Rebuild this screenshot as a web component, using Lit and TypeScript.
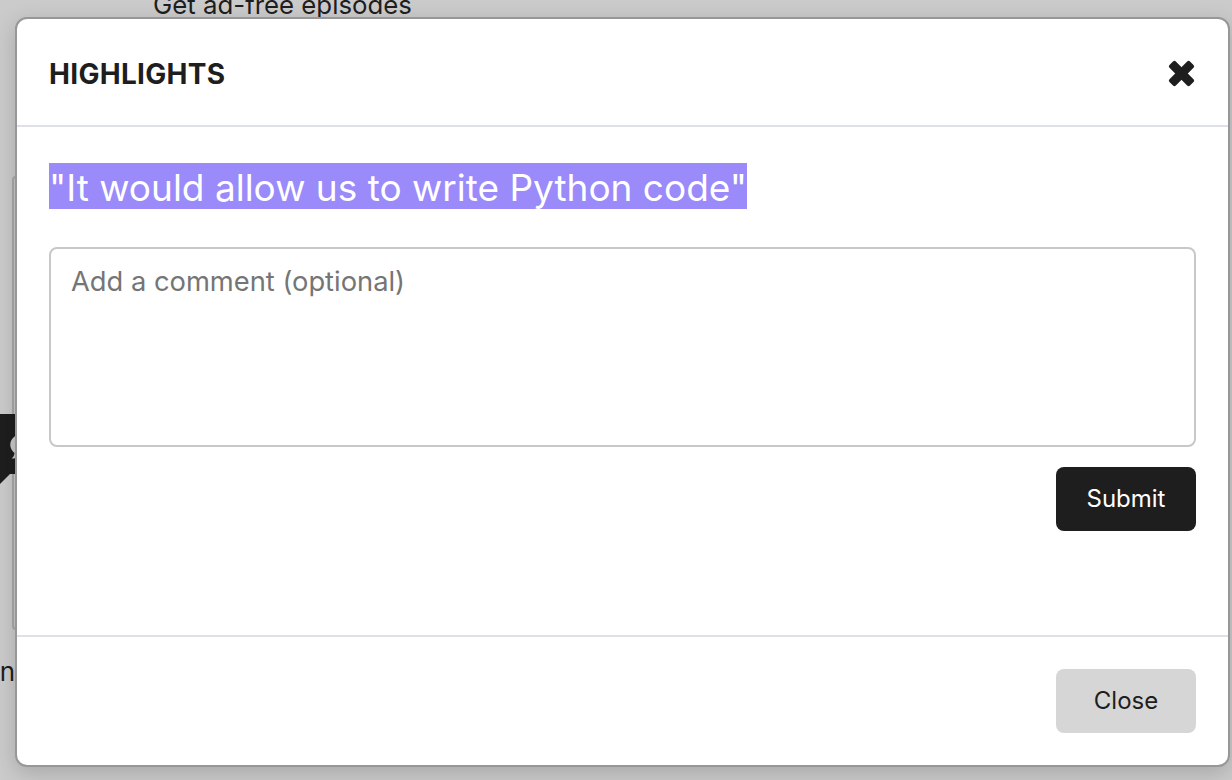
import { LitElement, html, css } from "lit";
import { customElement } from "lit/decorators.js";

@customElement("app-root")
export class AppRoot extends LitElement {
  static styles = css`
    :host {
      display: block;
      width: 1232px;
      height: 780px;
      overflow: hidden;
      position: relative;
      background: #cbcbcb;
      font-family: Inter, "Liberation Sans", sans-serif;
      color: #1e1e1e;
    }
    .page {
      height: 780px;
      display: flex;
      flex-direction: column;
      overflow: hidden;
    }
    .promo {
      margin: -9px 0 0 153px;
      font-size: 25.8px;
      line-height: 28px;
      height: 28px;
      flex: none;
      white-space: nowrap;
    }
    .card {
      margin: 157px 0 0 12px;
      width: 120px;
      height: 454px;
      flex: none;
      box-sizing: border-box;
      border: 2px solid #a9a9a9;
      border-radius: 4px;
    }
    .tag {
      position: absolute;
      left: 0;
      top: 414px;
      width: 40px;
      height: 60px;
      background: #1e1e1e;
    }
    .tag-tail {
      position: absolute;
      left: 0;
      top: 474px;
      width: 0;
      height: 0;
      border-top: 10px solid #1e1e1e;
      border-right: 10px solid transparent;
    }
    .bubble {
      position: absolute;
      left: 9px;
      top: 17px;
      width: 30px;
      height: 30px;
      display: block;
    }
    .cut {
      margin: 27px 0 0 -37px;
      font-size: 26px;
      line-height: 30px;
      white-space: nowrap;
    }
    .modal {
      position: absolute;
      left: 15px;
      top: 17px;
      width: 1215px;
      height: 750px;
      box-sizing: border-box;
      display: flex;
      flex-direction: column;
      background: #fff;
      border: 2px solid #979797;
      border-radius: 12px;
      box-shadow: 0 6px 22px rgba(0, 0, 0, 0.18);
    }
    .head {
      flex: none;
      height: 108px;
      box-sizing: border-box;
      border-bottom: 2px solid #dee2e6;
      display: flex;
      align-items: center;
      justify-content: space-between;
      padding: 0 33px 0 32px;
    }
    .title {
      font-size: 28px;
      font-weight: 700;
      letter-spacing: 0.3px;
      margin: 4px 0 0;
      color: #1e1e1e;
    }
    .x {
      width: 27px;
      height: 27px;
      display: block;
      margin-top: 2px;
    }
    .body {
      flex: 1;
      padding: 36px 32px 0;
      display: flex;
      flex-direction: column;
      align-items: stretch;
    }
    .quote {
      align-self: flex-start;
      background: #9a8afa;
      color: #fff;
      font-size: 37px;
      line-height: 42px;
      padding-top: 4px;
      white-space: nowrap;
    }
    .comment {
      margin-top: 38px;
      height: 200px;
      box-sizing: border-box;
      border: 2px solid #c8c8c8;
      border-radius: 8px;
      padding: 15px 20px;
      font-size: 27.3px;
      line-height: 36px;
      color: #757575;
    }
    .actions {
      display: flex;
      justify-content: flex-end;
      margin-top: 20px;
    }
    .btn {
      width: 140px;
      height: 64px;
      border: none;
      border-radius: 8px;
      font: inherit;
      font-size: 24px;
      letter-spacing: 0;
      padding: 0 0 2px;
    }
    .dark {
      background: #1e1e1e;
      color: #fff;
    }
    .grey {
      background: #d6d6d6;
      color: #1e1e1e;
    }
    .foot {
      flex: none;
      height: 130px;
      box-sizing: border-box;
      border-top: 2px solid #dee2e6;
      padding: 32px 32px 0;
      display: flex;
      justify-content: flex-end;
      align-items: flex-start;
    }
  `;

  render() {
    return html`
      <div class="page">
        <div class="promo">Get ad-free episodes</div>
        <div class="card"></div>
        <div class="cut">Join</div>
      </div>
      <div class="tag">
        <svg class="bubble" viewBox="0 0 24 24">
          <path fill="#cbcbcb" d="M12 2C5.900 2 1 6 1 11c0 2.600 1.300 4.900 3.400 6.500-.2 1.800-1 3.400-2.400 4.500 2.600 0 5-1 6.700-2.500 1.100.3 2.200.5 3.300.5 6.100 0 11-4 11-9s-4.900-9-11-9z"/>
        </svg>
      </div>
      <div class="tag-tail"></div>
      <div class="modal">
        <div class="head">
          <h2 class="title">HIGHLIGHTS</h2>
          <svg class="x" viewBox="0 0 27 27">
            <g fill="#1e1e1e" transform="rotate(45 13.500 13.500)">
              <rect x="-1" y="9" width="29" height="9" rx="2"/>
              <rect x="9" y="-1" width="9" height="29" rx="2"/>
            </g>
          </svg>
        </div>
        <div class="body">
          <div class="quote">"It would allow us to write Python code"</div>
          <div class="comment">Add a comment (optional)</div>
          <div class="actions"><button class="btn dark">Submit</button></div>
        </div>
        <div class="foot"><button class="btn grey">Close</button></div>
      </div>
    `;
  }
}
